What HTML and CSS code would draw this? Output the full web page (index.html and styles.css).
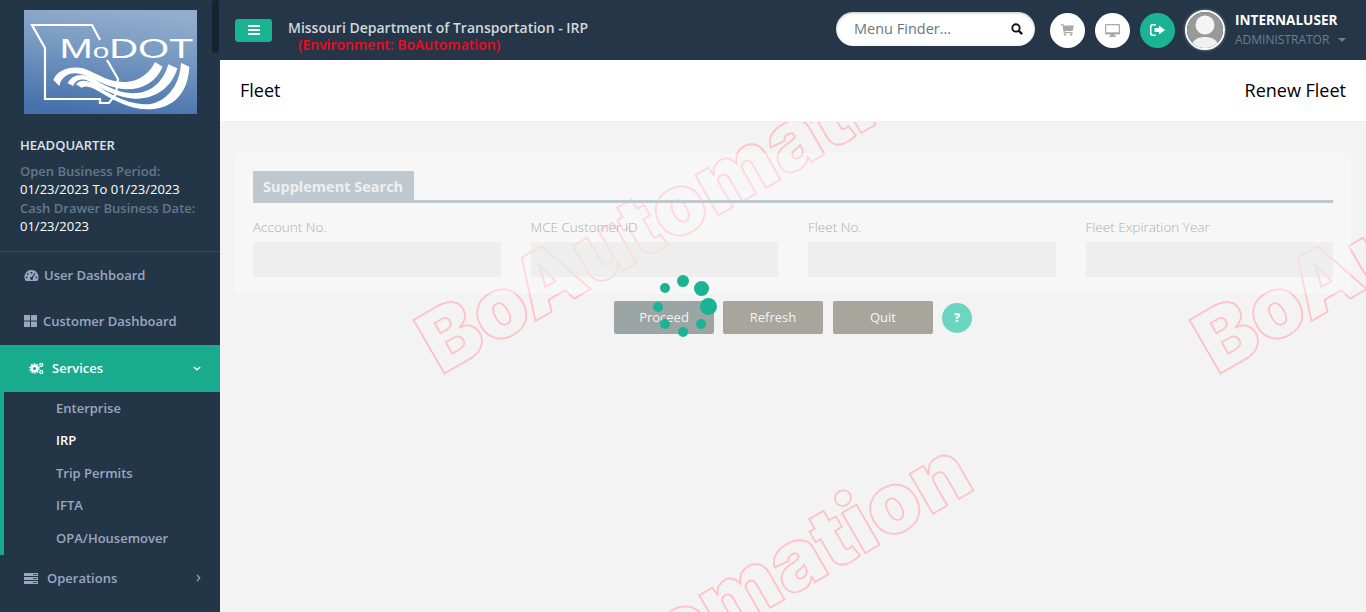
FILE: index.html
```html
<!DOCTYPE html>
<html lang="en">
<head>
    <meta charset="UTF-8">
    <meta name="viewport" content="width=device-width, initial-scale=1.0">
    <title>Fleet - Renew Fleet</title>
    <link rel="stylesheet" href="styles.css">
</head>
<body>
    <div class="app">
        <aside class="sidebar">
            <div class="scroll-thumb"></div>
            <div class="logo">
                <svg width="173" height="104" viewBox="0 0 173 104">
                    <defs>
                        <linearGradient id="logoBg" x1="0.6" y1="0" x2="0.4" y2="1">
                            <stop offset="0" stop-color="#93aecd"/>
                            <stop offset="0.45" stop-color="#7396c0"/>
                            <stop offset="1" stop-color="#4570aa"/>
                        </linearGradient>
                    </defs>
                    <rect width="173" height="104" fill="url(#logoBg)"/>
                    <path d="M76 30 L68 15 H8 L21 38 V89 H76 V93 H85 L92 84 L94 69 L83 50" fill="none" stroke="#fff" stroke-width="2.2"/>
                    <text class="logo-text" x="35.500" y="47.500" textLength="134" lengthAdjust="spacingAndGlyphs">M<tspan class="logo-small">o</tspan>DOT</text>
                    <g fill="#fff" transform="translate(-4,-4) scale(.3333)">
                        <path d="M100 222 C115 185 170 175 210 195 C250 215 280 230 320 228 C360 225 390 200 405 168 L428 182 C410 225 370 250 320 250 C270 250 220 215 185 205 C150 195 125 210 118 240 Z"/>
                        <path d="M143 232 C155 205 185 200 215 215 C250 235 290 260 340 262 C390 262 430 230 445 175 L472 187 C455 245 405 280 345 278 C290 275 240 245 205 225 C185 215 165 222 160 240 Z"/>
                        <path d="M168 235 C180 220 200 222 225 235 C265 262 310 290 370 295 C430 298 480 245 483 170 L508 182 C505 250 470 310 380 310 C320 310 270 275 225 250 C205 240 195 240 185 245 Z"/>
                    </g>
                </svg>
            </div>
            <div class="office">
                <h4>HEADQUARTER</h4>
                <p class="muted">Open Business Period:</p>
                <p>01/23/2023 To 01/23/2023</p>
                <p class="muted">Cash Drawer Business Date:</p>
                <p>01/23/2023</p>
            </div>
            <nav class="menu">
                <a class="menu-item first">
                    <svg class="mi" viewBox="0 0 16 14" width="15" height="13"><path fill="currentColor" fill-rule="evenodd" d="M8 1a7.5 7.5 0 0 0-6.5 11.3l.5.7h12l.5-.7A7.5 7.5 0 0 0 8 1zM8 3a1 1 0 1 1 0 2 1 1 0 0 1 0-2zM4 4.500a1 1 0 1 1 0 2 1 1 0 0 1 0-2zM2.800 8a1 1 0 1 1 0 2 1 1 0 0 1 0-2zM13.200 8a1 1 0 1 1 0 2 1 1 0 0 1 0-2zM11.500 4.300l.9.5L9.300 9.300a1.500 1.500 0 1 1-1-.6z"/></svg>
                    User Dashboard
                </a>
                <a class="menu-item second">
                    <svg class="mi" viewBox="0 0 13 12" width="13" height="12"><path fill="currentColor" d="M0 0h6v5.500H0zM7 0h6v5.500H7zM0 6.500h6V12H0zM7 6.500h6V12H7z"/></svg>
                    Customer Dashboard
                </a>
                <a class="menu-item active">
                    <svg class="mi cogs" viewBox="0 0 15 13" width="15" height="13"><g fill="none" stroke="currentColor"><circle cx="5.500" cy="6.500" r="2.800" stroke-width="2.400"/><circle cx="5.500" cy="6.500" r="4.600" stroke-width="1.400" stroke-dasharray="1.600 1.300"/><circle cx="12.300" cy="2.800" r="1.500" stroke-width="1.300"/><circle cx="12.300" cy="10.200" r="1.500" stroke-width="1.300"/></g></svg>
                    Services
                    <svg class="chev" viewBox="0 0 10 6" width="8" height="5"><path d="M1 1l4 3.600L9 1" fill="none" stroke="currentColor" stroke-width="1.600"/></svg>
                </a>
                <div class="submenu">
                    <a>Enterprise</a>
                    <a class="current">IRP</a>
                    <a>Trip Permits</a>
                    <a>IFTA</a>
                    <a>OPA/Housemover</a>
                </div>
                <a class="menu-item last">
                    <svg class="mi" viewBox="0 0 14 11" width="14" height="11"><path fill="currentColor" d="M0 0h14v3H0zM0 4h14v3H0zM0 8h14v3H0z"/><path fill="#233648" d="M9 1h4v.8H9zM9 5h4v.8H9zM9 9h4v.8H9z"/></svg>
                    Operations
                    <svg class="chev" viewBox="0 0 6 10" width="5" height="8"><path d="M1 1l3.600 4L1 9" fill="none" stroke="currentColor" stroke-width="1.500"/></svg>
                </a>
            </nav>
        </aside>

        <div class="main">
            <header class="topbar">
                <button class="toggle">
                    <svg viewBox="0 0 12 10" width="12" height="10"><path fill="#fff" d="M0 0h12v2H0zM0 4h12v2H0zM0 8h12v2H0z"/></svg>
                </button>
                <div class="brand">
                    <div class="brand-name">Missouri Department of Transportation - IRP</div>
                    <div class="brand-env">(Environment: BoAutomation)</div>
                </div>
                <div class="search">
                    <span>Menu Finder...</span>
                    <svg viewBox="0 0 14 14" width="12" height="12"><circle cx="5.800" cy="5.800" r="4.300" fill="none" stroke="#111" stroke-width="2.200"/><path d="M9 9l4 4" stroke="#111" stroke-width="2.600"/></svg>
                </div>
                <a class="round">
                    <svg viewBox="0 0 14 13" width="13" height="12"><path fill="#a9a9a9" d="M0 0h2.500l.5 1.500H14l-1.500 6H4l.3 1.300H12.500V10H3L1.500 1.300H0z"/><circle cx="4.500" cy="11.500" r="1.300" fill="#a9a9a9"/><circle cx="11" cy="11.500" r="1.300" fill="#a9a9a9"/></svg>
                </a>
                <a class="round">
                    <svg viewBox="0 0 15 13" width="15" height="13"><path fill="#a9a9a9" fill-rule="evenodd" d="M1 0h13a1 1 0 0 1 1 1v8.500a1 1 0 0 1-1 1H9.500l.5 1.500h1v1H4v-1h1l.5-1.500H1a1 1 0 0 1-1-1V1a1 1 0 0 1 1-1zM1.200 1.200v7h12.600v-7z"/></svg>
                </a>
                <a class="round green">
                    <svg viewBox="0 0 15 12" width="15" height="12"><path fill="#fff" d="M6 0H2.500A2.500 2.500 0 0 0 0 2.500v7A2.500 2.500 0 0 0 2.500 12H6v-1.500H3A1.500 1.500 0 0 1 1.500 9V3A1.500 1.500 0 0 1 3 1.500h3zM9 1.500L15 6l-6 4.500V8H4.500V4H9z"/></svg>
                </a>
                <div class="avatar">
                    <svg viewBox="0 0 36 36" width="36" height="36"><rect width="36" height="36" fill="#999"/><circle cx="18" cy="13" r="9.500" fill="#f4f4f4"/><path d="M4 36c1-9 8-11 14-11s13 2 14 11z" fill="#f0f0f0"/></svg>
                </div>
                <div class="user">
                    <div class="user-name">INTERNALUSER</div>
                    <div class="user-role">ADMINISTRATOR <i class="caret"></i></div>
                </div>
            </header>

            <div class="titlebar">
                <h2>Fleet</h2>
                <h2>Renew Fleet</h2>
            </div>

            <div class="content">
                <!-- watermark tiles sit behind the form -->
                <span class="wm wm-a">BoAutomation</span>
                <span class="wm wm-b">BoAutomation</span>
                <span class="wm wm-c">BoAutomation</span>

                <section class="panel">
                    <div class="tab-head"><span>Supplement Search</span></div>
                    <div class="fields">
                        <div class="field"><label>Account No.</label><div class="input"></div></div>
                        <div class="field"><label>MCE Customer ID</label><div class="input"></div></div>
                        <div class="field"><label>Fleet No.</label><div class="input"></div></div>
                        <div class="field"><label>Fleet Expiration Year</label><div class="input"></div></div>
                    </div>
                </section>

                <div class="actions">
                    <button class="btn proceed">Proceed</button>
                    <button class="btn">Refresh</button>
                    <button class="btn quit">Quit</button>
                    <span class="help">?</span>
                </div>

                <div class="spinner">
                    <i class="d1"></i><i class="d2"></i><i class="d3"></i><i class="d4"></i>
                    <i class="d5"></i><i class="d6"></i><i class="d7"></i><i class="d8"></i>
                </div>
            </div>
        </div>
    </div>
</body>
</html>
```

FILE: styles.css
```css
* {
    box-sizing: border-box;
}

html, body {
    margin: 0;
    padding: 0;
    height: 100%;
    overflow: hidden;
}

body {
    font-family: "Open Sans", Arial, sans-serif;
    font-size: 13px;
    background-color: #f3f3f3;
    color: #333;
}

.app {
    display: flex;
    height: 612px;
}

/* sidebar */
.sidebar {
    position: relative;
    width: 220px;
    flex: none;
    background-color: #233648;
    overflow: hidden;
}

.scroll-thumb {
    position: absolute;
    top: 0;
    left: 212px;
    width: 7px;
    height: 53px;
    border-radius: 4px;
    background-color: #17232e;
}

.logo {
    padding: 10px 0 0 24px;
    height: 114px;
}

.logo svg {
    display: block;
}

.logo-text {
    font-family: "Liberation Sans", Arial, sans-serif;
    font-size: 27px;
    fill: #fff;
}

.logo-small {
    font-size: 20px;
}

.office {
    padding: 22px 0 0 20px;
    height: 137px;
}

.office h4 {
    margin: 0 0 8px;
    font-size: 13px;
    line-height: 18px;
    font-weight: 600;
    color: #dfe4ed;
}

.office p {
    margin: 0;
    height: 19.500px;
    font-size: 13px;
    line-height: 18.500px;
    color: #fff;
}

.office .muted {
    height: 17.500px;
    font-weight: 600;
    color: #64778b;
}

.menu {
    border-top: 1px solid #34495c;
}

.menu-item {
    display: flex;
    align-items: center;
    height: 46px;
    padding-left: 24px;
    font-size: 13px;
    font-weight: 600;
    color: #9aa7c0;
}

.menu-item .mi {
    margin-right: 5px;
}

.menu-item.second {
    height: 47px;
    padding-bottom: 1px;
}

.menu-item.second .mi {
    margin-right: 6px;
}

.menu-item.active {
    height: 47px;
    padding-left: 29px;
    padding-bottom: 1px;
    background-color: #19ab8d;
    color: #fff;
}

.menu-item.active .mi {
    margin-right: 8px;
}

.menu-item.last .mi {
    margin-right: 9px;
}

.chev {
    margin-left: auto;
    margin-right: 19px;
}

.submenu {
    display: flex;
    flex-direction: column;
    height: 163px;
    border-left: 4px solid #19ab8d;
}

.submenu a {
    display: block;
    height: 32.400px;
    line-height: 32.400px;
    padding-left: 52px;
    font-weight: 600;
    color: #9aa7c0;
}

.submenu a.current {
    color: #fff;
}

/* top bar */
.main {
    flex: 1;
    display: flex;
    flex-direction: column;
    min-width: 0;
}

.topbar {
    display: flex;
    align-items: center;
    height: 60px;
    flex: none;
    padding-left: 15px;
    background-color: #243648;
}

.toggle {
    display: flex;
    align-items: center;
    justify-content: center;
    width: 37px;
    height: 23px;
    padding: 0;
    border: 0;
    border-radius: 3px;
    background-color: #1ab394;
}

.brand {
    margin-left: 16px;
    padding-top: 12px;
    width: 548px;
    font-size: 14px;
    font-weight: 600;
    line-height: 17px;
}

.brand-name {
    color: #d3d8dc;
}

.brand-env {
    padding-left: 10px;
    color: #f5071b;
}

.search {
    display: flex;
    align-items: center;
    justify-content: space-between;
    width: 199px;
    height: 34px;
    margin-bottom: 2px;
    padding: 0 12px 0 18px;
    border-radius: 17px;
    background-color: #fff;
    box-shadow: inset 0 1px 3px rgba(0, 0, 0, 0.25);
    font-size: 14.500px;
    color: #6b7580;
}

.search span {
    margin-bottom: 2px;
}

.round {
    display: flex;
    align-items: center;
    justify-content: center;
    width: 35px;
    height: 35px;
    margin-left: 10px;
    border-radius: 50%;
    background-color: #fff;
}

.search + .round {
    margin-left: 15px;
}

.round.green {
    background-color: #1ab394;
}

.avatar {
    width: 40px;
    height: 40px;
    margin-left: 10px;
    border: 2px solid #fff;
    border-radius: 50%;
    overflow: hidden;
    box-shadow: 0 0 3px rgba(255, 255, 255, 0.5);
}

.avatar svg {
    display: block;
}

.user {
    margin-left: 10px;
    margin-bottom: 2px;
}

.user-name {
    font-size: 13.600px;
    font-weight: 700;
    line-height: 20px;
    color: #fff;
}

.user-role {
    margin-top: 1px;
    font-size: 12px;
    line-height: 18px;
    color: #6b7f94;
}

.caret {
    display: inline-block;
    margin-left: 6px;
    vertical-align: middle;
    border-top: 4px solid #6b7f94;
    border-left: 4px solid transparent;
    border-right: 4px solid transparent;
}

/* page title */
.titlebar {
    display: flex;
    align-items: center;
    justify-content: space-between;
    flex: none;
    height: 62px;
    padding: 0 20px 2px;
    background-color: #fff;
    border-bottom: 1px solid #f0f0f0;
}

.titlebar h2 {
    margin: 0;
    font-size: 18px;
    font-weight: 500;
    color: #000;
}

/* content */
.content {
    position: relative;
    flex: 1;
    overflow: hidden;
    padding: 31px 15px 0;
}

.wm {
    position: absolute;
    font-family: Inter, "Liberation Sans", sans-serif;
    font-size: 85px;
    font-weight: 900;
    line-height: 85px;
    white-space: nowrap;
    color: transparent;
    -webkit-text-stroke: 1.700px #ffc0c6;
    transform: rotate(-30deg);
    transform-origin: 0 100%;
}

.wm-a {
    left: 227px;
    top: 179px;
}

.wm-b {
    left: 1003px;
    top: 179px;
}

.wm-c {
    left: 231px;
    top: 599px;
}

.panel {
    position: relative;
    height: 141px;
    padding: 18px 18px 0;
    background-color: rgba(255, 255, 255, 0.35);
}

.tab-head {
    height: 32px;
    border-bottom: 3px solid #c0c8cf;
}

.tab-head span {
    display: inline-block;
    height: 29px;
    padding: 0 11px 0 10px;
    font-size: 14.500px;
    font-weight: 700;
    line-height: 31px;
    color: #edf0f2;
    background-color: #c0c8cf;
}

.fields {
    display: grid;
    grid-template-columns: repeat(4, 1fr);
    column-gap: 30px;
    padding-top: 15px;
}

.field label {
    display: block;
    height: 24px;
    font-size: 13.500px;
    font-weight: 300;
    line-height: 18px;
    color: #aeaeae;
}

.input {
    height: 35px;
    background-color: rgba(232, 232, 232, 0.55);
}

.actions {
    position: relative;
    display: flex;
    align-items: center;
    gap: 9px;
    margin-top: 7px;
    padding-left: 379px;
}

.btn {
    width: 100px;
    height: 33px;
    padding: 0 0 2px;
    border: 0;
    border-radius: 2px;
    font-family: inherit;
    font-size: 13px;
    color: #f4f4f2;
    background-color: #a8a59d;
}

.proceed {
    background-color: #9ba5a4;
}

.quit {
    margin-left: 1px;
}

.help {
    width: 30px;
    height: 30px;
    border-radius: 50%;
    text-align: center;
    font-size: 12px;
    font-weight: 800;
    line-height: 30px;
    color: #fff;
    background-color: #6cd5c1;
}

/* loading spinner over the buttons */
.spinner {
    position: absolute;
    left: 463px;
    top: 184px;
    width: 0;
    height: 0;
}

.spinner i {
    position: absolute;
    border-radius: 50%;
    background-color: #1ab394;
}

.d1 { left: -6px; top: -31px; width: 12px; height: 12px; }
.d2 { left: 11px; top: -25px; width: 15px; height: 15px; }
.d3 { left: 17px; top: -8px; width: 17px; height: 17px; }
.d4 { left: 13px; top: 13px; width: 10px; height: 10px; }
.d5 { left: -5px; top: 21px; width: 10px; height: 10px; }
.d6 { left: -23px; top: 13px; width: 10px; height: 10px; }
.d7 { left: -30px; top: -4px; width: 10px; height: 10px; }
.d8 { left: -23px; top: -23px; width: 10px; height: 10px; }
```
